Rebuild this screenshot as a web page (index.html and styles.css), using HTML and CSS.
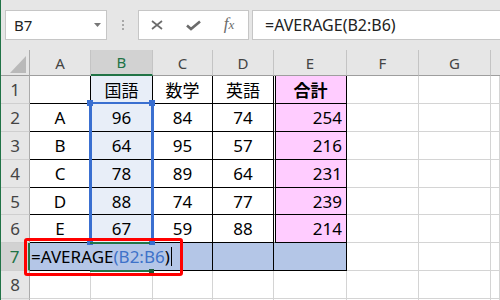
FILE: index.html
```html
<!DOCTYPE html>
<html lang="ja">
<head>
<meta charset="utf-8">
<link rel="stylesheet" href="styles.css">
</head>
<body>
<div class="app">
  <div class="bar">
    <div class="namebox"><span>B7</span><svg class="dd" width="7" height="4" viewBox="0 0 7 4"><path d="M0 0H7L3.5 4Z" fill="#777"/></svg></div>
    <div class="grip"><i></i><i></i><i></i></div>
    <div class="buttons">
      <span class="btn"><svg width="12" height="10" viewBox="0 0 12 10"><path d="M1 1L11 9M11 1L1 9" stroke="#6b6b6b" stroke-width="1.7" fill="none"/></svg></span>
      <span class="btn"><svg width="15" height="11" viewBox="0 0 15 11"><path d="M1 5.5L5 9L14 1.5" stroke="#6b6b6b" stroke-width="2.6" fill="none"/></svg></span>
      <span class="btn fx"><i>f</i><i class="x">x</i></span>
    </div>
    <div class="formula">=AVERAGE(B2:B6)</div>
  </div>
  <div class="sheet">
    <div class="corner"><svg width="28" height="25" viewBox="0 0 28 25"><path d="M9 23H25V6Z" fill="#b9b9b9"/></svg></div>
    <div class="ch">A</div><div class="ch sel">B</div><div class="ch">C</div><div class="ch">D</div><div class="ch">E</div><div class="ch">F</div><div class="ch">G</div><div class="ch last"></div>

    <div class="rh">1</div>
    <div class="t"></div><div class="t bsel ctr">国語</div><div class="t ctr">数学</div><div class="t ctr">英語</div><div class="t e ctr bold">合計</div><div class="c"></div><div class="c"></div><div class="c"></div>

    <div class="rh">2</div>
    <div class="t ctr">A</div><div class="t bsel ctr">96</div><div class="t ctr">84</div><div class="t ctr">74</div><div class="t e num">254</div><div class="c"></div><div class="c"></div><div class="c"></div>

    <div class="rh">3</div>
    <div class="t ctr">B</div><div class="t bsel ctr">64</div><div class="t ctr">95</div><div class="t ctr">57</div><div class="t e num">216</div><div class="c"></div><div class="c"></div><div class="c"></div>

    <div class="rh">4</div>
    <div class="t ctr">C</div><div class="t bsel ctr">78</div><div class="t ctr">89</div><div class="t ctr">64</div><div class="t e num">231</div><div class="c"></div><div class="c"></div><div class="c"></div>

    <div class="rh">5</div>
    <div class="t ctr">D</div><div class="t bsel ctr">88</div><div class="t ctr">74</div><div class="t ctr">77</div><div class="t e num">239</div><div class="c"></div><div class="c"></div><div class="c"></div>

    <div class="rh">6</div>
    <div class="t ctr">E</div><div class="t bsel ctr">67</div><div class="t ctr">59</div><div class="t ctr">88</div><div class="t e num">214</div><div class="c"></div><div class="c"></div><div class="c"></div>

    <div class="rh sel">7</div>
    <div class="t blue span3 edit">=AVERAGE<span class="ref">(B2:B6</span>)<span class="cursor"></span></div><div class="t blue"></div><div class="t blue"></div><div class="c"></div><div class="c"></div><div class="c"></div>

    <div class="rh">8</div>
    <div class="c"></div><div class="c"></div><div class="c"></div><div class="c"></div><div class="c"></div><div class="c"></div><div class="c"></div><div class="c"></div>

    <div class="rh"></div>
    <div class="c"></div><div class="c"></div><div class="c"></div><div class="c"></div><div class="c"></div><div class="c"></div><div class="c"></div><div class="c"></div>

    <div class="range"></div>
    <div class="handle h-tl"></div><div class="handle h-tr"></div><div class="handle h-bl"></div><div class="handle h-br"></div>
    <div class="active"></div>
    <div class="fillhandle"></div>
    <div class="redbox"></div>
  </div>
</div>
</body>
</html>
```
FILE: styles.css
```css
* { box-sizing: border-box; margin: 0; padding: 0; }
html, body { width: 500px; height: 300px; overflow: hidden; background: #fff; }
body { font-family: "Noto Sans", "Noto Sans CJK JP", sans-serif; color: #000; }

.app {
  width: 500px; height: 300px; overflow: hidden;
  border-left: 1px solid #217346;
  background: #e6e6e6;
  display: flex; flex-direction: column;
}

/* formula bar */
.bar { height: 50px; flex: none; display: flex; align-items: flex-start; padding: 10px 0 0 4px; }
.namebox {
  width: 102px; height: 30px; flex: none;
  background: #fff; border: 1px solid #c6c6c6;
  display: flex; align-items: center; justify-content: space-between;
  padding: 0 5px 0 8px; font-size: 15px; color: #222;
}
.grip { width: 31px; height: 30px; flex: none; display: flex; flex-direction: column; align-items: center; justify-content: center; gap: 2px; }
.grip i { display: block; width: 2px; height: 2px; background: #a8a8a8; }
.buttons {
  width: 111px; height: 30px; flex: none;
  background: #fff; border: 1px solid #c6c6c6;
  display: flex; align-items: center;
}
.btn { width: 36px; height: 28px; display: flex; align-items: center; justify-content: center; }
.fx { font-family: "Liberation Serif", serif; color: #6b6b6b; font-size: 17px; padding-bottom: 2px; }
.fx i { font-style: italic; }
.fx .x { font-size: 13px; margin-left: 0; position: relative; top: 1px; }
.formula {
  width: 260px; height: 30px; flex: none; margin-left: 3px;
  background: #fff; border: 1px solid #c6c6c6;
  display: flex; align-items: center; padding-left: 12px;
  font-size: 16px; color: #222; white-space: nowrap;
}

/* sheet */
.sheet {
  flex: 1; position: relative; background: #fff;
  display: grid;
  grid-template-columns: 29px 61px 62px 60px 61px 73px 72px 72px 1fr;
  grid-template-rows: 26px 28px 28px 28px 28px 27px 28px 28px 28px 28px;
}
.corner { background: #e6e6e6; border-right: 1px solid #ababab; border-bottom: 1px solid #9e9e9e; }
.corner svg { display: block; }
.ch {
  background: #e6e6e6; border-right: 1px solid #c4c4c4; border-bottom: 1px solid #9e9e9e;
  display: flex; align-items: center; justify-content: center;
  font-size: 15px; color: #444;
}
.ch.last { border-right: none; }
.ch.sel { background: #d2d2d2; color: #217346; border-bottom: 2px solid #217346; }
.rh {
  background: #e6e6e6; border-right: 1px solid #ababab; border-bottom: 1px solid #cfcfcf;
  display: flex; align-items: center; justify-content: center;
  font-size: 17px; color: #444;
}
.rh.sel { background: #d2d2d2; color: #217346; border-right: 2px solid #217346; }

.c { border-right: 1px solid #d4d4d4; border-bottom: 1px solid #d4d4d4; }
.t {
  border-right: 1px solid #000; border-bottom: 1px solid #000;
  display: flex; align-items: center; font-size: 17px;
}
.ctr { justify-content: center; }
.num { justify-content: flex-end; padding-right: 4px; }
.bold { font-weight: 700; }
.bsel { background: #e8eef8; }
.e { background: #ffccff; border-left: 1px solid #fff; box-shadow: inset 1px 0 #000; }
.blue { background: #b4c6e7; }
.span3 { grid-column: span 3; }
.edit { padding-left: 1px; white-space: nowrap; }
.ref { color: #3e72c9; }
.cursor { display: inline-block; width: 1px; height: 19px; background: #000; margin-left: 1px; }

/* overlays */
.range { position: absolute; left: 88px; top: 52px; width: 65px; height: 142px; border: solid #3a6fd0; border-width: 2px 3px 0 3px; }
.handle { position: absolute; width: 6px; height: 6px; background: #3a6fd0; }
.h-tl { left: 86px; top: 50px; }
.h-tr { left: 148px; top: 50px; }
.h-bl { left: 86px; top: 189px; }
.h-br { left: 148px; top: 189px; }
.active { position: absolute; left: 89px; top: 192px; width: 60px; height: 30px; border-top: 2px solid #217346; border-bottom: 2px solid #217346; }
.fillhandle { position: absolute; left: 148px; top: 219px; width: 5px; height: 5px; background: #1d5c39; }
.redbox { position: absolute; left: 23px; top: 188px; width: 159px; height: 38px; border: 3px solid #ff0000; border-radius: 3px; }
```
